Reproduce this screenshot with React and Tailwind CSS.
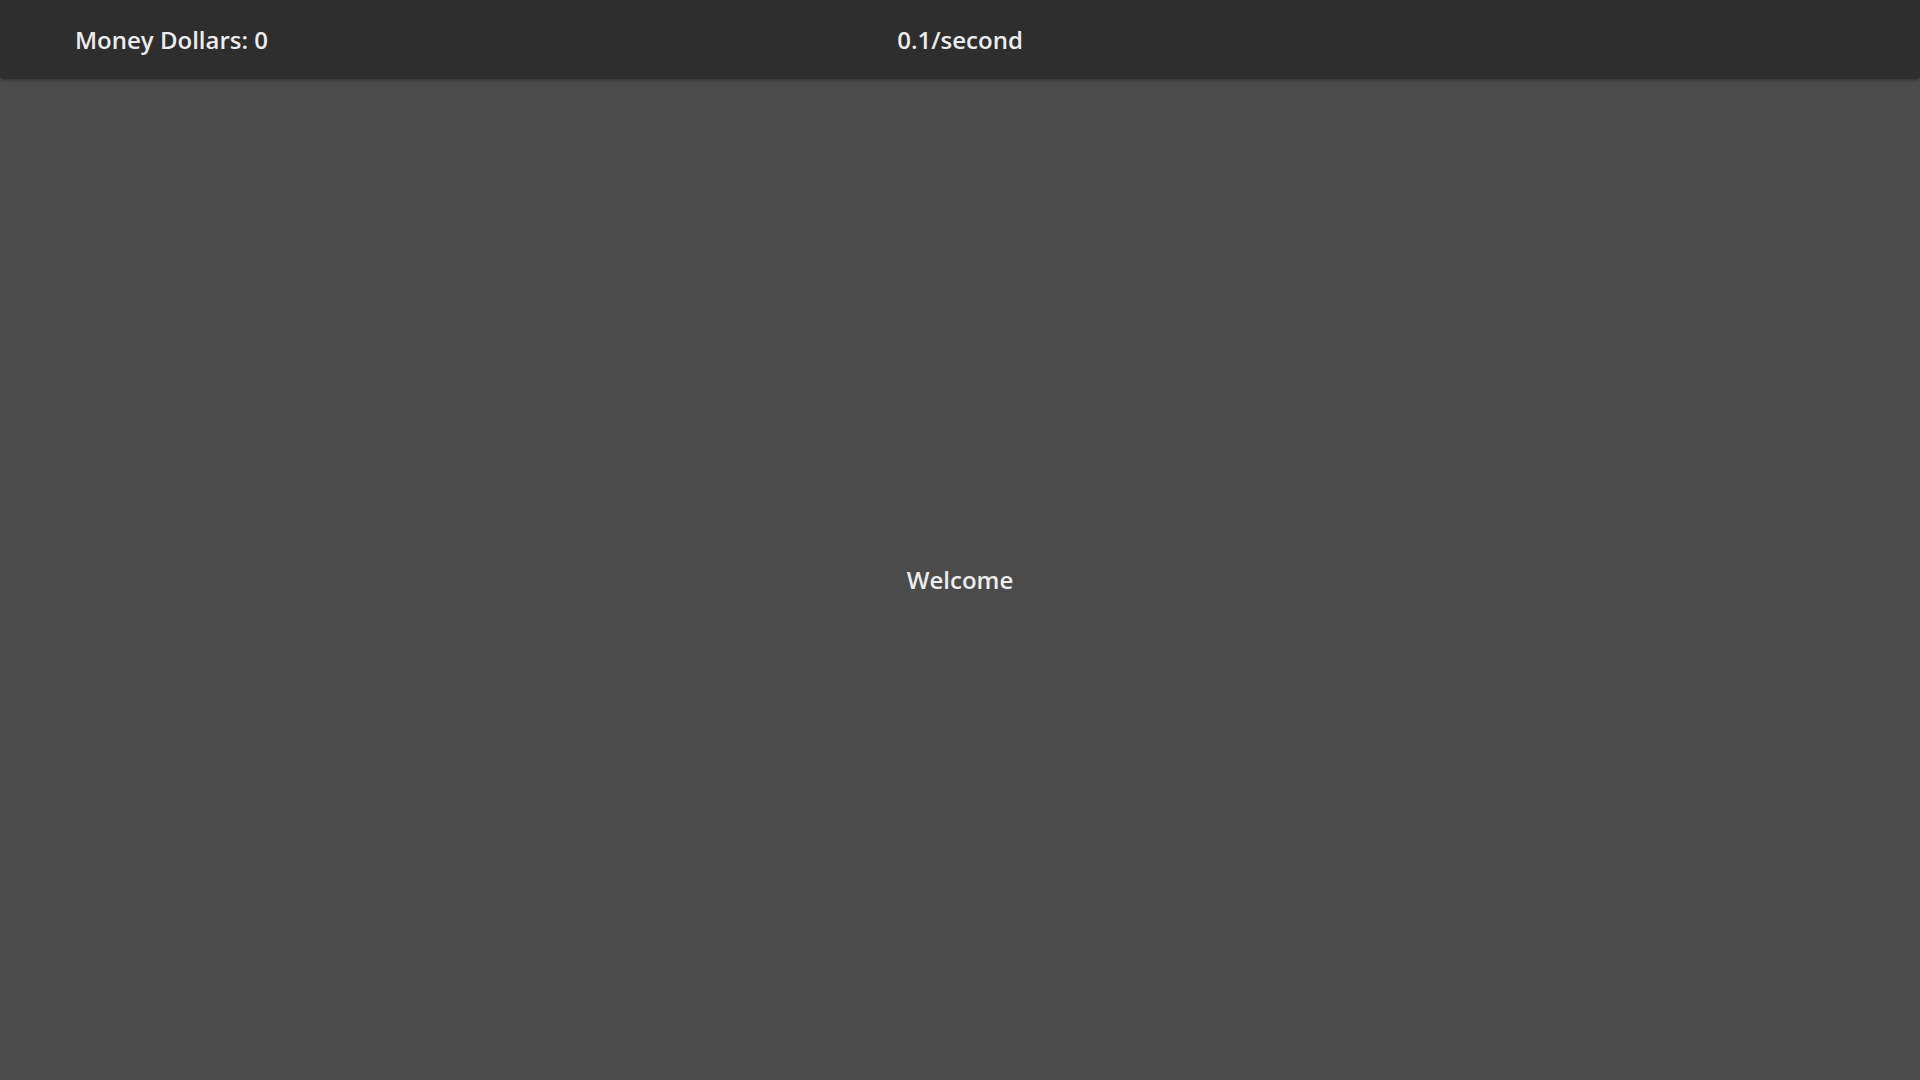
import React from "react";

const App = () => {
  return (
    <div
      className="min-h-screen w-full flex flex-col bg-[#4b4b4b] text-[#ececec]"
      style={{ fontFamily: '"Open Sans", "Noto Sans", sans-serif' }}
    >
      {/* Top bar */}
      <header className="h-[79px] grid grid-cols-3 items-center bg-[#2e2e2e] rounded-b-[4px] shadow-[0_1px_3px_rgba(0,0,0,0.35)]">
        <div className="pl-[75px] text-[24px] font-semibold">Money Dollars: 0</div>
        <div className="text-center text-[24px] font-semibold">0.1/second</div>
        <div />
      </header>

      {/* Main */}
      <main className="flex-1 flex items-center justify-center">
        <h2 className="text-[24px] font-semibold">Welcome</h2>
      </main>
    </div>
  );
};

export default App;
